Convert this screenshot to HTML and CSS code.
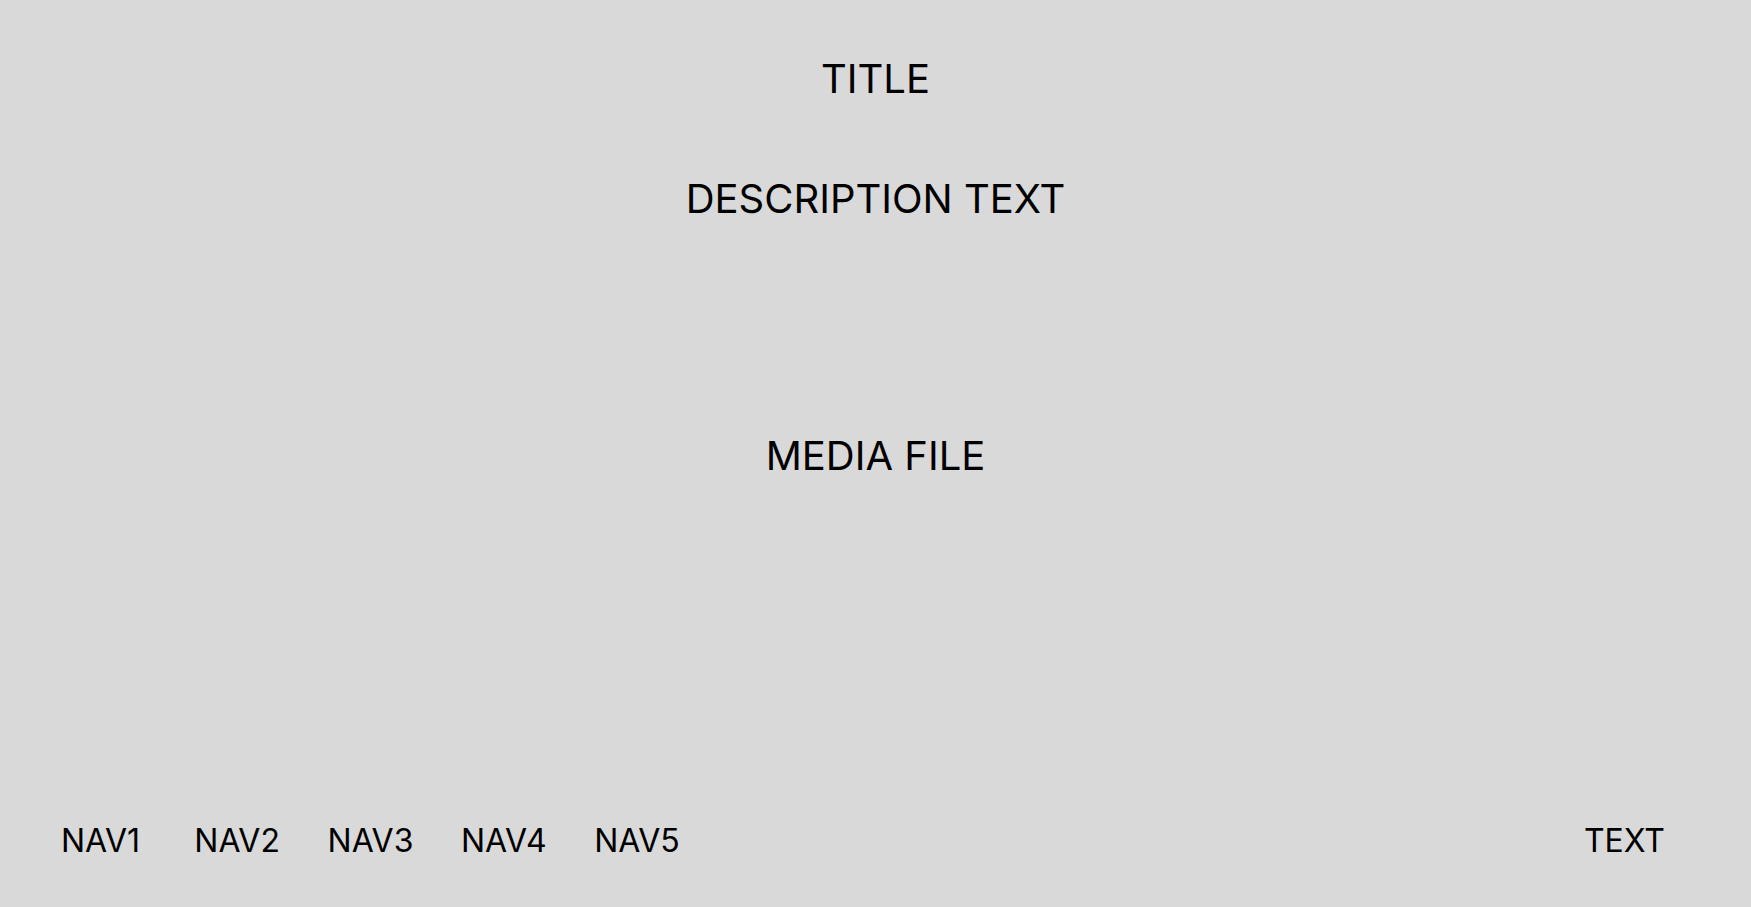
FILE: index.html
```html
<!DOCTYPE html>
<html>
<head>
<meta charset="utf-8">
<link rel="stylesheet" href="styles.css">
</head>
<body>
<div class="page">
  <header class="head">
    <h1 class="title">TITLE</h1>
    <p class="desc">DESCRIPTION TEXT</p>
  </header>
  <main class="media">MEDIA FILE</main>
  <footer class="foot">
    <nav class="nav">
      <a class="nav-item">NAV1</a>
      <a class="nav-item">NAV2</a>
      <a class="nav-item">NAV3</a>
      <a class="nav-item">NAV4</a>
      <a class="nav-item">NAV5</a>
    </nav>
    <span class="foot-text">TEXT</span>
  </footer>
</div>
</body>
</html>
```

FILE: styles.css
```css
html, body {
  margin: 0;
  padding: 0;
  background: #d9d9d9;
}
.page {
  height: 907px;
  display: flex;
  flex-direction: column;
  font-family: Inter, "Liberation Sans", sans-serif;
  color: #000;
}
.head {
  display: flex;
  flex-direction: column;
  align-items: center;
  padding-top: 54px;
}
.title, .desc {
  margin: 0;
  font-size: 40px;
  font-weight: 400;
  line-height: normal;
}
.desc {
  margin-top: 71px;
}
.media {
  margin-top: 208px;
  text-align: center;
  font-size: 40px;
  line-height: normal;
}
.foot {
  margin-top: auto;
  padding: 0 86px 47px 61px;
  display: flex;
  justify-content: space-between;
  align-items: center;
  font-size: 32px;
  line-height: normal;
}
.nav {
  display: grid;
  grid-template-columns: repeat(5, 133.3px);
}
.nav-item {
  color: #000;
  text-decoration: none;
}
```
